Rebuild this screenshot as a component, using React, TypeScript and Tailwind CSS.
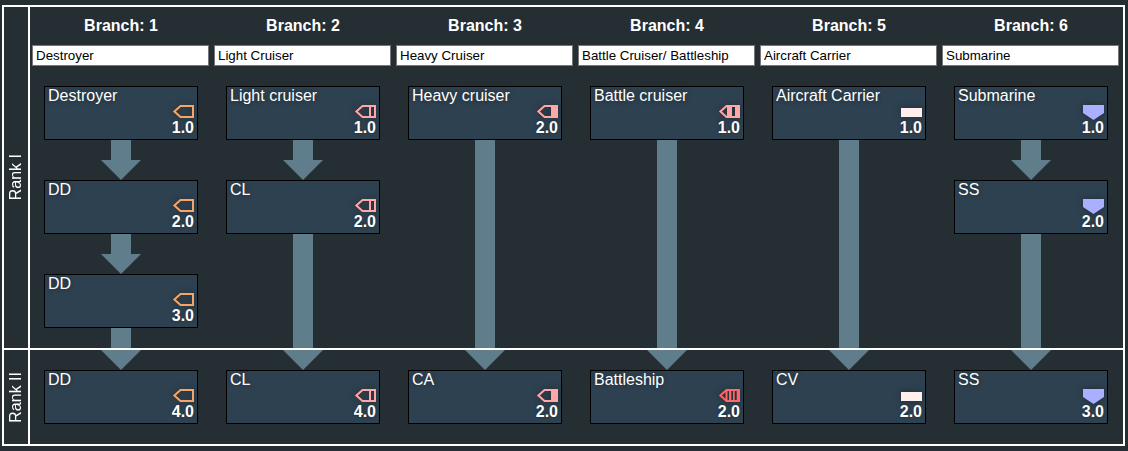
import React from 'react';

type Kind = 'dd' | 'cl' | 'ca' | 'bc' | 'bb' | 'cv' | 'ss';

function ShipIcon({ kind }: { kind: Kind }) {
    const shadow = 'block overflow-visible drop-shadow-[0_0_3px_#1f2a33]';
    if (kind === 'cv') {
        return (
            <svg width="21" height="15" viewBox="0 0 21 15" className={shadow}>
                <rect x="0" y="4" width="21" height="9" fill="#ffeeee" />
            </svg>
        );
    }
    if (kind === 'ss') {
        return (
            <svg width="21" height="15" viewBox="0 0 21 15" className={shadow}>
                <path d="M0 1H21V9L10.5 16L0 9Z" fill="#aab0ff" />
            </svg>
        );
    }
    const color = kind === 'dd' ? '#f7a468' : kind === 'bb' ? '#ff6666' : '#ffa6a6';
    return (
        <svg width="21" height="15" viewBox="0 0 21 15" className={shadow}>
            <path d="M1.4 7.5L7.5 2H20V13H7.5Z" fill="none" stroke={color} strokeWidth="2" />
            {kind === 'cl' && <rect x="14" y="2" width="2" height="11" fill={color} />}
            {kind === 'ca' && <rect x="14" y="2" width="6" height="11" fill={color} />}
            {kind === 'bc' && (
                <>
                    <rect x="8" y="2" width="5" height="11" fill={color} />
                    <rect x="16" y="2" width="4" height="11" fill={color} />
                </>
            )}
            {kind === 'bb' && (
                <>
                    <rect x="6.5" y="2" width="2" height="11" fill={color} />
                    <rect x="10" y="2" width="2.3" height="11" fill={color} />
                    <rect x="14" y="2" width="1.7" height="11" fill={color} />
                    <rect x="17.7" y="2" width="2" height="11" fill={color} />
                </>
            )}
        </svg>
    );
}

function Card({ label, kind, level }: { label: string; kind: Kind; level: string }) {
    return (
        <div className="flex h-[54px] w-[154px] shrink-0 flex-col border border-black bg-[#2e4150] px-[3px] text-white">
            <div className="h-[17px] text-[16px] leading-[18px] [text-shadow:0_0_4px_#1f2a33]">{label}</div>
            <div className="flex flex-1 flex-col items-end">
                <ShipIcon kind={kind} />
                <div className="text-[16px] font-bold leading-[18px] [text-shadow:0_0_3px_#1f2a33]">{level}</div>
            </div>
        </div>
    );
}

// short arrows sit between two cards of one rank, the last one stretches to the next rank
function Arrow({ short }: { short: boolean }) {
    return (
        <div className={short ? 'flex h-[40px] shrink-0 flex-col items-center' : 'flex flex-1 flex-col items-center'}>
            <div className="w-5 flex-1 bg-[#607d8b]" />
            <div className="h-0 w-0 border-x-[20px] border-t-[20px] border-x-transparent border-t-[#607d8b]" />
        </div>
    );
}

const branches: { name: string; cards: { label: string; kind: Kind; level: string }[] }[] = [
    {
        name: 'Destroyer',
        cards: [
            { label: 'Destroyer', kind: 'dd', level: '1.0' },
            { label: 'DD', kind: 'dd', level: '2.0' },
            { label: 'DD', kind: 'dd', level: '3.0' },
            { label: 'DD', kind: 'dd', level: '4.0' },
        ],
    },
    {
        name: 'Light Cruiser',
        cards: [
            { label: 'Light cruiser', kind: 'cl', level: '1.0' },
            { label: 'CL', kind: 'cl', level: '2.0' },
            { label: 'CL', kind: 'cl', level: '4.0' },
        ],
    },
    {
        name: 'Heavy Cruiser',
        cards: [
            { label: 'Heavy cruiser', kind: 'ca', level: '2.0' },
            { label: 'CA', kind: 'ca', level: '2.0' },
        ],
    },
    {
        name: 'Battle Cruiser/ Battleship',
        cards: [
            { label: 'Battle cruiser', kind: 'bc', level: '1.0' },
            { label: 'Battleship', kind: 'bb', level: '2.0' },
        ],
    },
    {
        name: 'Aircraft Carrier',
        cards: [
            { label: 'Aircraft Carrier', kind: 'cv', level: '1.0' },
            { label: 'CV', kind: 'cv', level: '2.0' },
        ],
    },
    {
        name: 'Submarine',
        cards: [
            { label: 'Submarine', kind: 'ss', level: '1.0' },
            { label: 'SS', kind: 'ss', level: '2.0' },
            { label: 'SS', kind: 'ss', level: '3.0' },
        ],
    },
];

export default function App() {
    return (
        <div className="h-[451px] w-[1128px] overflow-hidden bg-[#252e33] pl-[2px] pt-[5px] font-['Liberation_Sans',Arial,sans-serif] text-white">
            <div className="flex h-[441px] w-[1123px] border-2 border-white">
                {/* Rank labels */}
                <div className="flex w-[24px] shrink-0 flex-col">
                    <div className="flex h-[343px] items-center justify-center border-b-2 border-white">
                        <span className="rotate-180 text-[16px] [writing-mode:vertical-rl]">Rank I</span>
                    </div>
                    <div className="flex flex-1 items-center justify-center">
                        <span className="rotate-180 text-[16px] [writing-mode:vertical-rl]">Rank II</span>
                    </div>
                </div>

                {/* Branch columns */}
                <div className="relative flex flex-1 border-l-2 border-white">
                    {branches.map((branch, i) => (
                        <div key={branch.name} className="flex w-[182px] flex-col items-center pb-[20px]">
                            <div className="flex h-[38px] items-center pb-[1px] text-[16px] font-bold">Branch: {i + 1}</div>
                            <input
                                readOnly
                                value={branch.name}
                                className="ml-[-1px] h-[21px] w-[177px] border border-[#767676] bg-white px-[3px] text-[13.33px] text-black"
                            />
                            <div className="mt-[20px] flex flex-1 flex-col items-center">
                                {branch.cards.map((card, j) => (
                                    <React.Fragment key={j}>
                                        {j > 0 && <Arrow short={j < branch.cards.length - 1} />}
                                        <Card {...card} />
                                    </React.Fragment>
                                ))}
                            </div>
                        </div>
                    ))}
                    {/* Rank divider runs over the arrows */}
                    <div className="absolute left-0 right-0 top-[341px] h-[2px] bg-white" />
                </div>
            </div>
        </div>
    );
}
